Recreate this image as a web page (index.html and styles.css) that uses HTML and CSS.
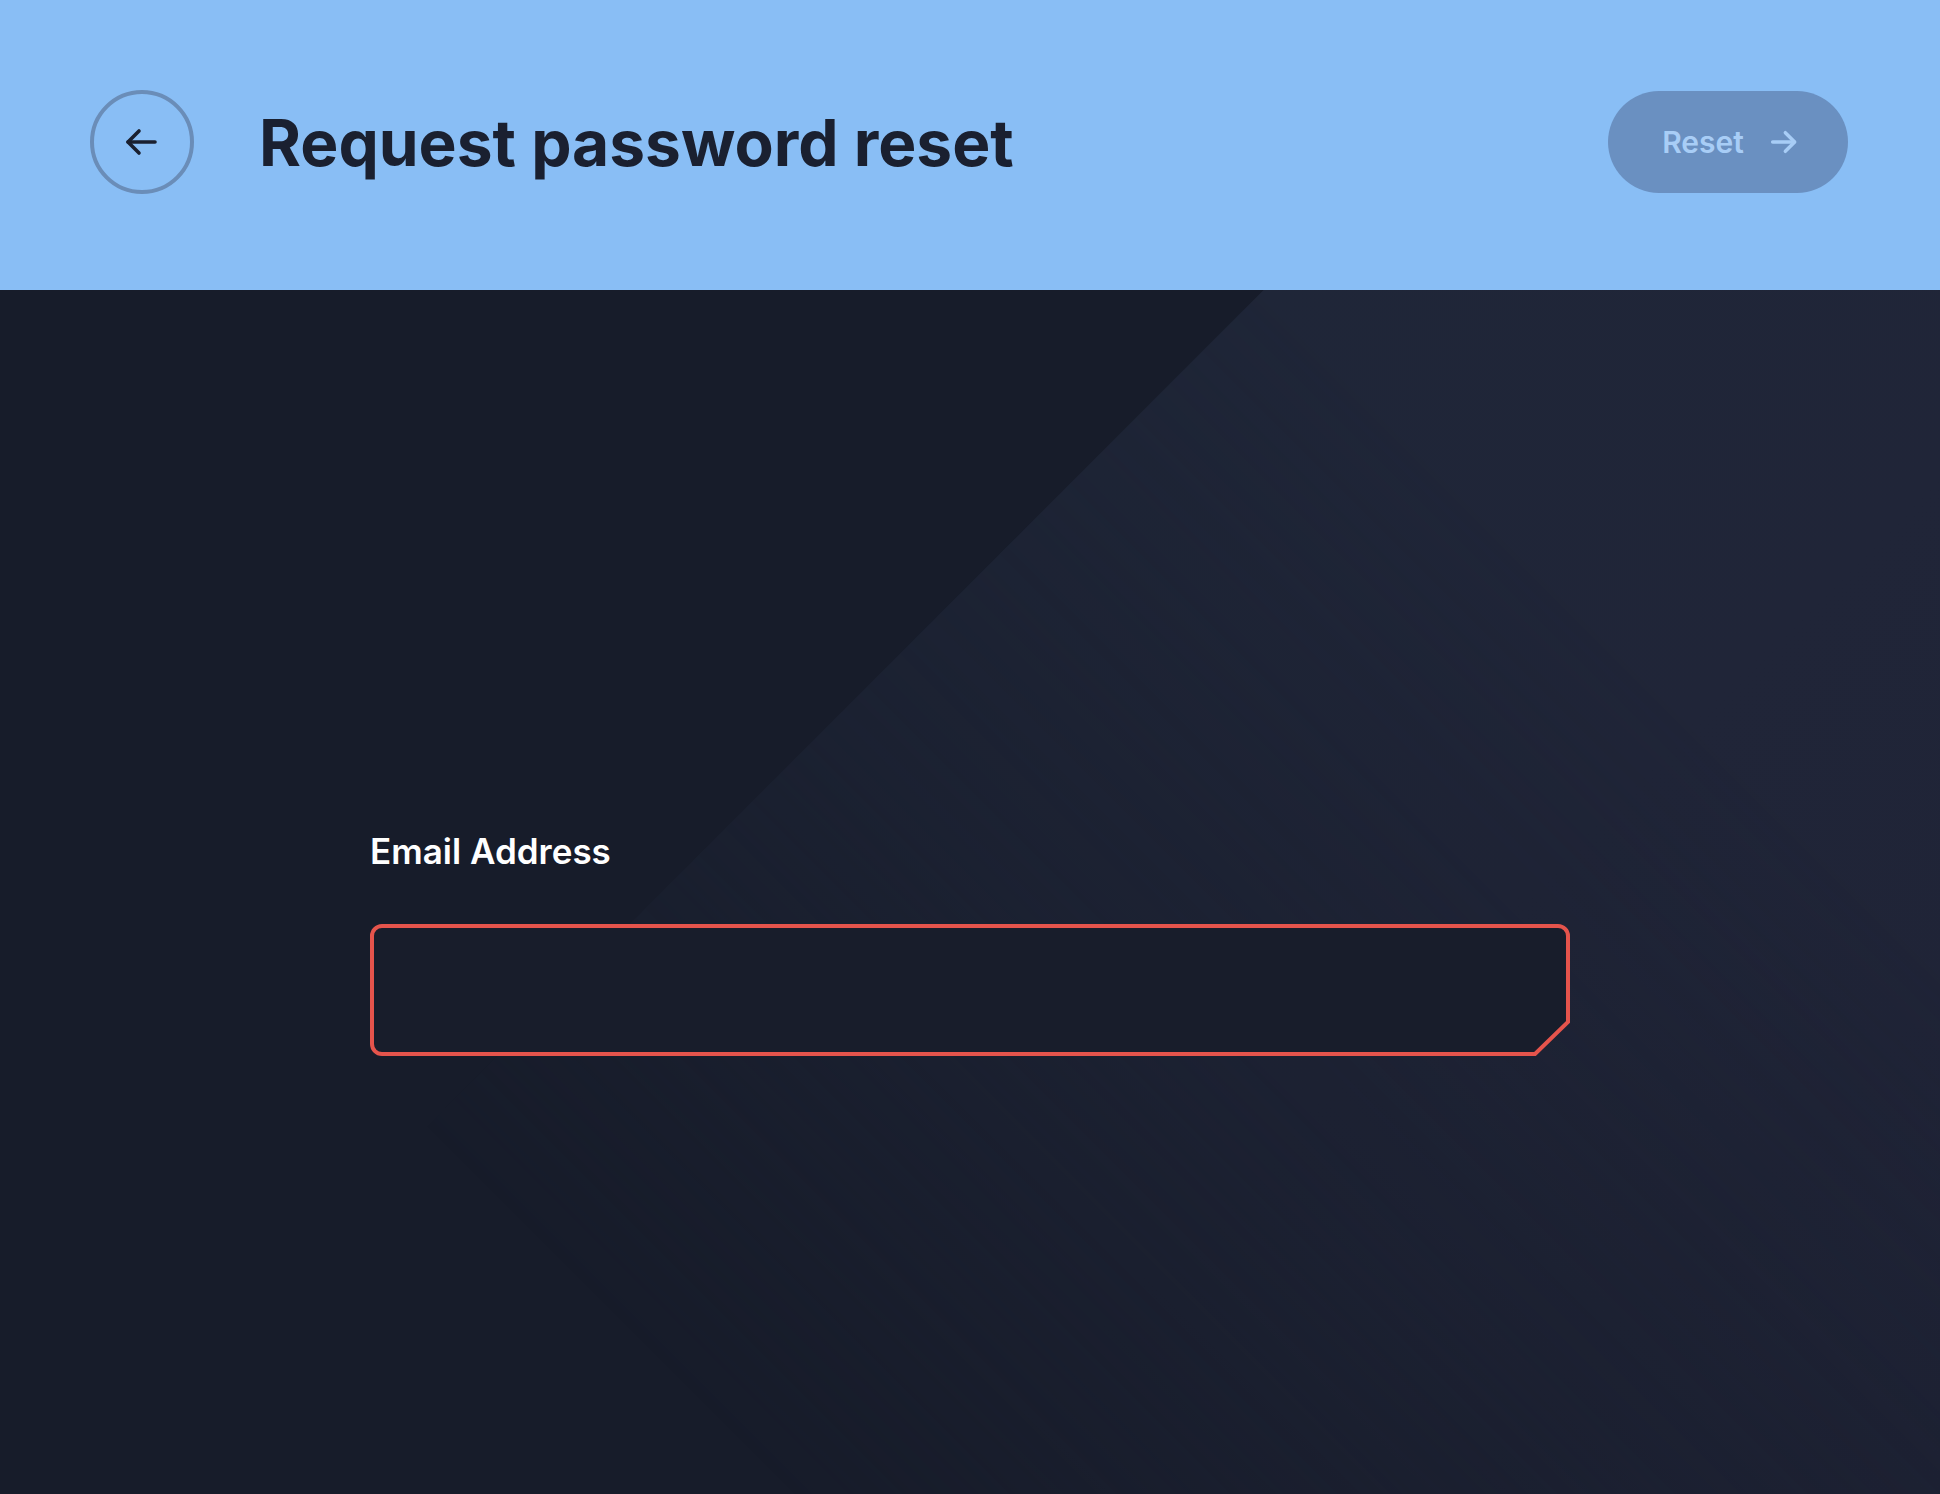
FILE: index.html
```html
<!DOCTYPE html>
<html lang="en">
<head>
    <meta charset="UTF-8">
    <meta name="viewport" content="width=device-width, initial-scale=1.0">
    <title>Request password reset</title>
    <link rel="stylesheet" href="styles.css">
</head>
<body>

    <header class="topbar">
        <button class="btn-back" aria-label="Back">
            <svg width="34" height="28" viewBox="0 0 34 28" fill="none" stroke="#1a2030" stroke-width="3.6" stroke-linecap="round" stroke-linejoin="round">
                <path d="M31 14H4"/>
                <path d="M15 3L4 14l11 11"/>
            </svg>
        </button>
        <h1 class="title">Request password reset</h1>
        <button class="btn-reset" disabled>
            Reset
            <svg width="32" height="32" viewBox="0 0 24 24" fill="none" stroke="currentColor" stroke-width="2.6" stroke-linecap="round" stroke-linejoin="round">
                <path d="M3.5 12h16"/>
                <path d="M13 5l7 7-7 7"/>
            </svg>
        </button>
    </header>

    <main class="content">
        <form class="reset-form">
            <label class="field-label" for="email">Email Address</label>
            <div class="field">
                <svg class="field-frame" width="1200" height="132" viewBox="0 0 1200 132">
                    <path d="M12 2 H1188 A10 10 0 0 1 1198 12 V98 L1165 130 H12 A10 10 0 0 1 2 120 V12 A10 10 0 0 1 12 2 Z" fill="#181d2b" stroke="#e5544c" stroke-width="4"/>
                </svg>
                <input id="email" type="email" class="field-input">
            </div>
        </form>
    </main>

</body>
</html>
```

FILE: styles.css
```css
body {
    margin: 0;
    padding: 0;
    font-family: 'Inter', 'Liberation Sans', sans-serif;
    background-color: #171c2a;
    min-height: 1494px;
    display: flex;
    flex-direction: column;
}

.topbar {
    height: 290px;
    box-sizing: border-box;
    background-color: #89bef5;
    display: flex;
    align-items: center;
    padding: 0 92px 6px 90px;
}

.btn-back {
    width: 104px;
    height: 104px;
    border-radius: 50%;
    border: 4px solid #6a8db8;
    background: transparent;
    display: flex;
    align-items: center;
    justify-content: center;
    padding: 0 2px 0 0;
    cursor: pointer;
}

.title {
    margin: 0 0 0 65px;
    font-size: 64px;
    font-weight: 700;
    letter-spacing: 0;
    color: #1a2030;
    flex: 1;
}

.btn-reset {
    width: 240px;
    height: 102px;
    border-radius: 51px;
    border: none;
    background-color: #6a90c1;
    color: #a8cdf6;
    font-family: 'Inter', 'Liberation Sans', sans-serif;
    font-size: 30px;
    font-weight: 600;
    display: flex;
    align-items: center;
    justify-content: center;
    gap: 24px;
    padding: 0 0 0 6px;
}

.content {
    flex: 1;
    position: relative;
    background-color: #171c2a;
    display: flex;
    justify-content: center;
}

/* lighter diagonal panel, fading out towards the bottom left */
.content::before {
    content: "";
    position: absolute;
    inset: 0;
    background: linear-gradient(135deg, transparent 0px, transparent 893px, #1f2638 894px, #202538 1500px, #1f2336 2223px);
    -webkit-mask-image: linear-gradient(45deg, transparent 560px, rgba(0, 0, 0, 0.55) 1150px, #000 1750px);
    mask-image: linear-gradient(45deg, transparent 560px, rgba(0, 0, 0, 0.55) 1150px, #000 1750px);
}

.reset-form {
    position: relative;
    width: 1200px;
    padding-top: 540px;
    display: flex;
    flex-direction: column;
}

.field-label {
    color: #ffffff;
    font-size: 35px;
    font-weight: 600;
    margin-left: 0;
    margin-bottom: 52px;
}

.field {
    position: relative;
    width: 1200px;
    height: 132px;
}

.field-frame {
    position: absolute;
    top: 0;
    left: 0;
}

.field-input {
    position: relative;
    width: 100%;
    height: 100%;
    box-sizing: border-box;
    padding: 0 40px;
    border: none;
    outline: none;
    background: transparent;
    color: #ffffff;
    font-size: 30px;
}
```
